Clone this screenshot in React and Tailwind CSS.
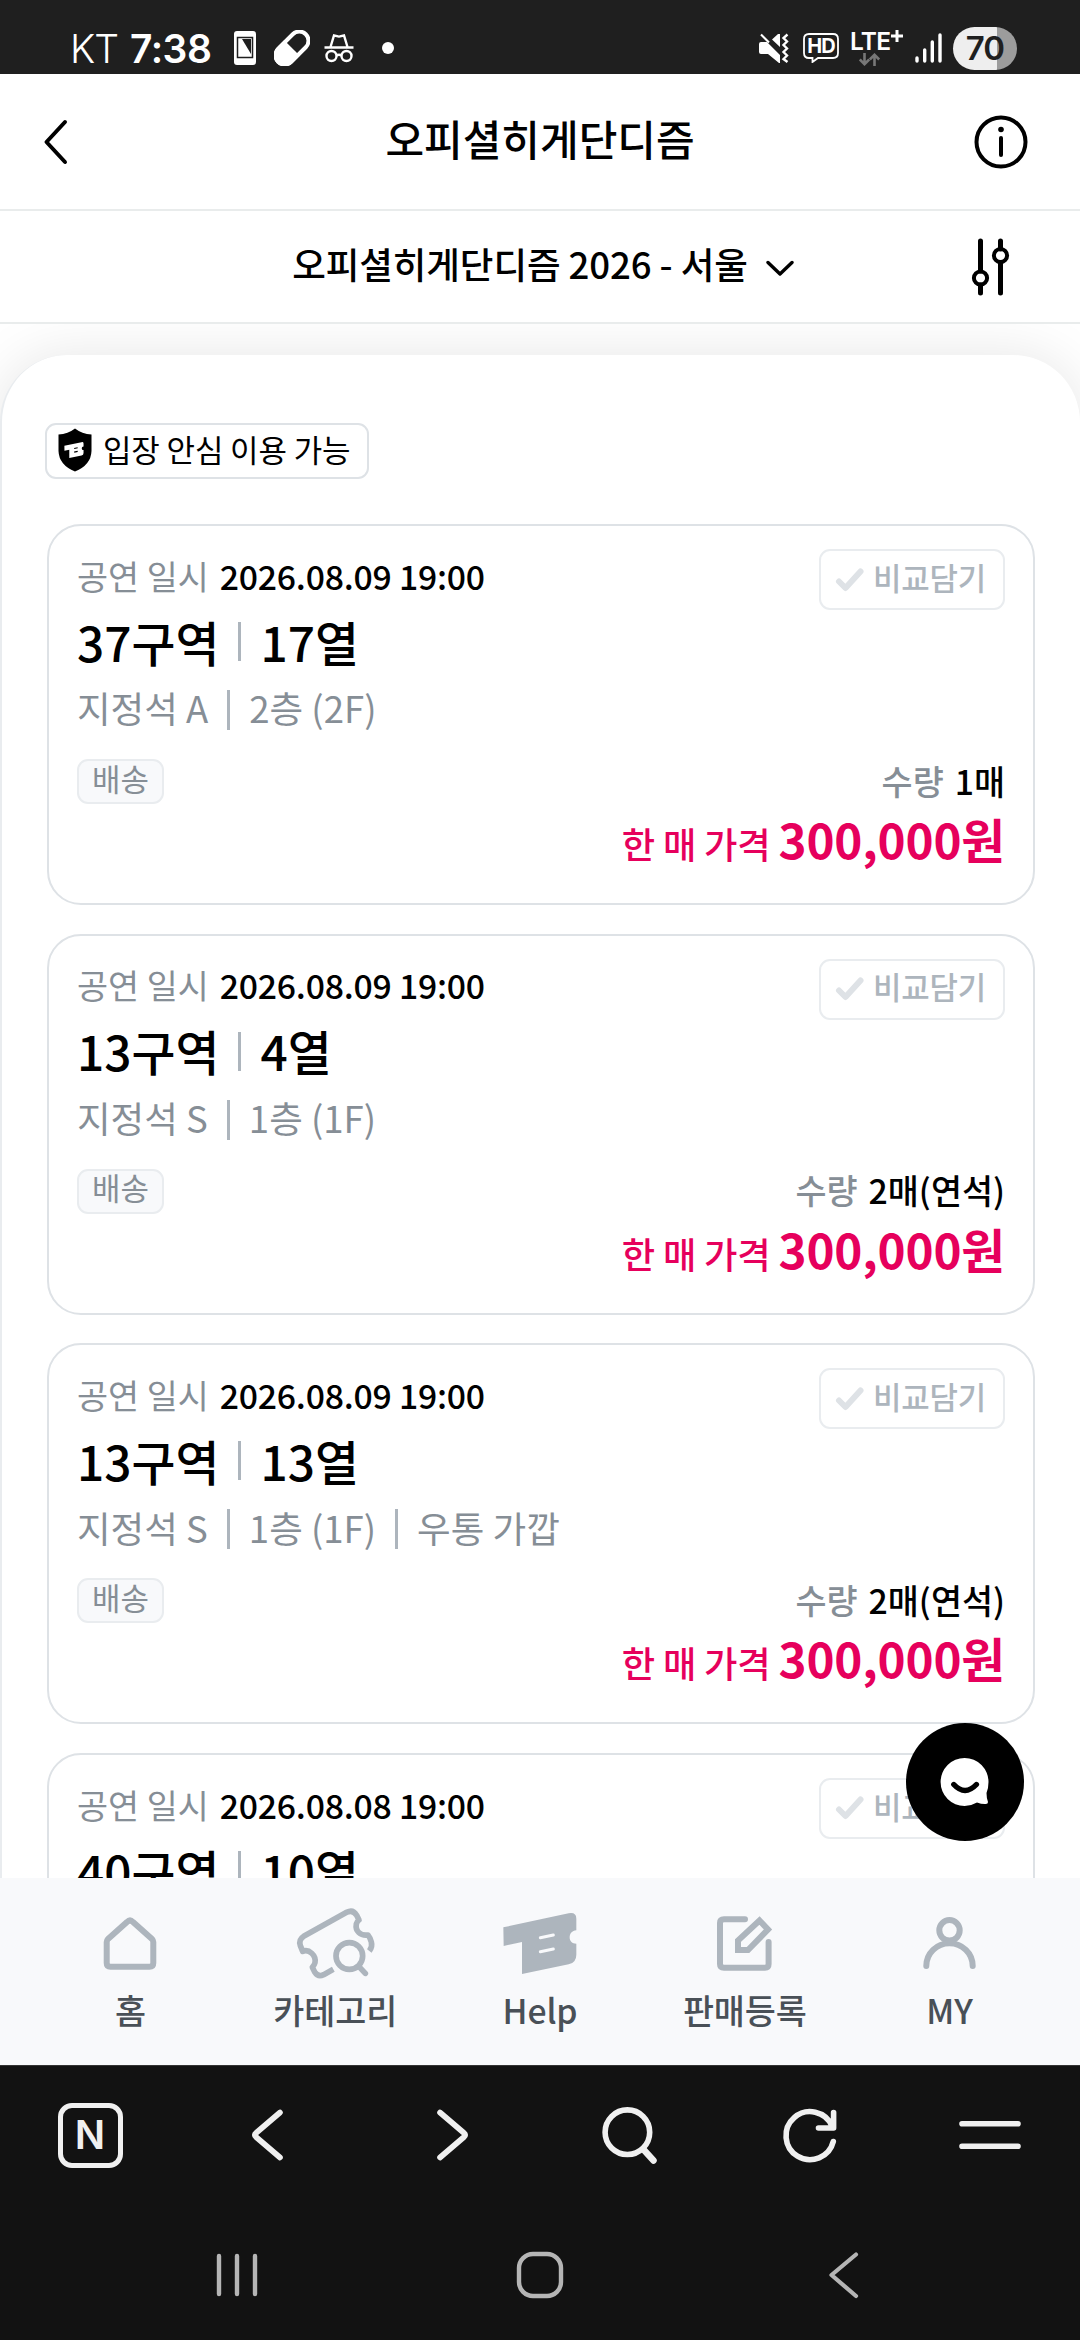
import React from 'react';

const tickets = [
  { date: '2026.08.09 19:00', area: '37구역', row: '17열', seat: ['지정석 A', '2층 (2F)'], qty: '1매', price: '300,000원' },
  { date: '2026.08.09 19:00', area: '13구역', row: '4열', seat: ['지정석 S', '1층 (1F)'], qty: '2매(연석)', price: '300,000원' },
  { date: '2026.08.09 19:00', area: '13구역', row: '13열', seat: ['지정석 S', '1층 (1F)', '우통 가깝'], qty: '2매(연석)', price: '300,000원' },
  { date: '2026.08.08 19:00', area: '40구역', row: '10열' },
];

const LOGO = 'M670 82 L866 40 Q889 36 889 56 V91 C876 92 869 101 869 112 C869 124 877 131 889 131 V164 Q889 188 866 193 L726 222 V126 L671 138 Z';

const StatusBar = () => (
  <div className="flex h-[74px] shrink-0 items-center bg-[#1f1f1f] pt-[22px] pl-[70px] pr-[63px] font-['Inter',sans-serif] text-white">
    <span className="w-[60px] text-[39px] leading-none font-light tracking-[-1px]">KT</span>
    <span className="w-[104px] text-[39px] leading-none font-semibold tracking-[-0.5px]">7:38</span>
    <svg width="22" height="34" viewBox="0 0 22 34">
      <rect width="22" height="34" rx="3" fill="#fff" />
      <rect x="3.5" y="6.5" width="15" height="20" fill="#fff" stroke="#1f1f1f" strokeWidth="1.5" />
      <path d="M8 8 H17 V23 Z" fill="#1f1f1f" />
    </svg>
    <svg className="ml-[18px]" width="36" height="36" viewBox="0 0 36 36">
      <g transform="rotate(45 18 18)">
        <rect x="8.8" y="-1.5" width="18.4" height="39" rx="9.2" fill="none" stroke="#fff" strokeWidth="4" />
        <path d="M7 18 H29 V28.5 A11 11 0 0 1 7 28.5 Z" fill="#fff" />
      </g>
    </svg>
    <svg className="ml-[14px]" width="30" height="30" viewBox="0 0 30 30" fill="none" stroke="#fff" strokeWidth="2.4">
      <path d="M0.5 14.5 H29.5 M6.5 14 L10 2.5 L13 3.2 Q15 4 17 3.2 L20 2.5 L23.5 14" />
      <circle cx="7.5" cy="23" r="5" />
      <circle cx="22.5" cy="23" r="5" />
      <path d="M12.5 22.5 Q15 21 17.5 22.5" />
    </svg>
    <span className="ml-[28px] h-3 w-3 rounded-full bg-white" />
    <svg className="ml-auto" width="30" height="30" viewBox="0 0 30 30">
      <path d="M0 11 Q0 9 2 9 H8 L21 22 V30 H20 L9 21 H2 Q0 21 0 19 Z M13 6.5 L19 1 H21 V14 Z" fill="#fff" />
      <path d="M2 1.5 L10 9.5" stroke="#fff" strokeWidth="2.2" />
      <path d="M28.5 1.5 L24.5 5 L28 8.5 L24.5 12 L28 15.5 L24.5 19 L28 22.5 L24.5 26 L28.5 29" fill="none" stroke="#fff" strokeWidth="2.4" />
    </svg>
    <div className="relative ml-[14px] h-[30px] w-[36px]">
      <svg width="36" height="30" viewBox="0 0 36 30" fill="none" stroke="#fff" strokeWidth="1.8">
        <path d="M6 1 H30 Q35 1 35 6 V20 Q35 25 30 25 H15 L9.5 29 V25 H6 Q1 25 1 20 V6 Q1 1 6 1 Z" />
      </svg>
      <span className="absolute top-[3px] left-0 w-full text-center text-[20px] leading-[20px] font-bold tracking-[-1px]">HD</span>
    </div>
    <div className="ml-[11px] flex h-[38px] w-[56px] flex-col">
      <div className="flex h-[22px] items-start">
        <span className="text-[24.5px] leading-[24px] font-semibold tracking-[-0.8px]">LTE</span>
        <svg width="14" height="14" viewBox="0 0 14 14"><path d="M7 1 V13 M1 7 H13" stroke="#fff" strokeWidth="3" /></svg>
      </div>
      <svg className="ml-[9px] mt-[2px]" width="22" height="13" viewBox="0 0 22 13" fill="none" stroke="#777" strokeWidth="2.6">
        <path d="M5.5 0 V11 M0.8 6.5 L5.5 11.2 L10.2 6.5 M15.5 13 V2 M10.8 6.5 L15.5 1.8 L20.2 6.5" />
      </svg>
    </div>
    <svg className="ml-[9px]" width="27" height="30" viewBox="0 0 27 30" stroke="#fff" strokeWidth="3.4" strokeLinecap="round">
      <path d="M2 25 V28 M9.7 17 V28 M17.3 9 V28 M25 2 V28" />
    </svg>
    <div className="ml-[11px] flex h-[43px] w-[64px] items-center justify-center overflow-hidden rounded-full bg-[linear-gradient(90deg,#eee_44px,#9c9c9c_44px)] text-[33px] leading-none font-semibold tracking-[-1px] text-[#1f1f1f]">
      70
    </div>
  </div>
);

const Header = () => (
  <header className="grid h-[137px] shrink-0 grid-cols-[1fr_auto_1fr] items-center border-b-2 border-[#e9ecec] px-[43px]">
    <svg width="26" height="46" viewBox="0 0 26 46" fill="none" stroke="#000" strokeWidth="4" strokeLinecap="round" strokeLinejoin="round">
      <path d="M22 3 L3.5 23 L22 43" />
    </svg>
    <h1 className="pb-[7px] text-[42px] leading-[60px] font-medium">오피셜히게단디즘</h1>
    <svg className="mr-[8px] justify-self-end" width="56" height="56" viewBox="0 0 56 56" fill="none" stroke="#000" strokeWidth="4" strokeLinecap="round">
      <circle cx="28" cy="28" r="24.5" />
      <path d="M28 24 V41" />
      <circle cx="28" cy="15.5" r="2.8" fill="#000" stroke="none" />
    </svg>
  </header>
);

const EventSelect = () => (
  <div className="grid h-[113px] shrink-0 grid-cols-[1fr_auto_1fr] items-center border-b-2 border-[#e9ecec] px-[43px]">
    <span />
    <div className="flex items-center pl-[6px]">
      <span className="pb-[5px] text-[36.56px] leading-[52px] font-medium tracking-[-0.1px]">오피셜히게단디즘 2026 - 서울</span>
      <svg className="mt-[3px] ml-[18px]" width="28" height="18" viewBox="0 0 28 18" fill="none" stroke="#000" strokeWidth="3.4" strokeLinecap="round" strokeLinejoin="round">
        <path d="M2 3.5 L14 15 L26 3.5" />
      </svg>
    </div>
    <svg className="mr-[27px] justify-self-end" width="40" height="60" viewBox="0 0 40 60" fill="none" stroke="#000" strokeLinecap="round">
      <path d="M10.5 4 V34 M10.5 48 V56 M30.5 4 V12 M30.5 26 V56" strokeWidth="5" />
      <circle cx="10.5" cy="41" r="6.6" strokeWidth="4" />
      <circle cx="30.5" cy="18.5" r="6.6" strokeWidth="4" />
    </svg>
  </div>
);

const SafeBadge = () => (
  <div className="flex h-[56px] w-[324px] items-center rounded-[11px] border-2 border-[#dee2e6] pl-[11px]">
    <svg className="mb-[3px] shrink-0" width="34" height="44" viewBox="0 0 34 44">
      <path d="M17 0.5 Q24 6 33.5 6.5 V23 Q33 37 17 43.5 Q1 37 0.5 23 V6.5 Q10 6 17 0.5 Z" fill="#000" />
      <svg x="5.5" y="12" width="21" height="20" viewBox="660 25 240 210">
        <path d={LOGO} fill="#fff" />
        <path d="M782 113 L822 104 M782 155 L822 146" stroke="#000" strokeWidth="14" />
      </svg>
    </svg>
    <span className="ml-[11px] pb-[4px] text-[30.94px] leading-[44px] tracking-[-0.1px] whitespace-nowrap">입장 안심 이용 가능</span>
  </div>
);

const Divider = ({ className }) => <span className={`mx-[19px] w-[3px] bg-[#adb5bd] ${className}`} />;

const TicketCard = ({ ticket }) => (
  <article className="h-[381px] shrink-0 rounded-[34px] border-2 border-[#dee2e6] px-[28px]">
    <div className="flex items-start justify-between">
      <div className="pt-[28px]">
        <p className="flex h-[43px] items-center text-[33.75px] leading-none">
          <span className="text-[#868e96]">공연 일시</span>
          <span className="ml-[11px] font-medium tracking-[-0.22px]">{ticket.date}</span>
        </p>
        <h2 className="flex h-[89px] items-center text-[47.8px] leading-none font-medium">
          <span>{ticket.area}</span>
          <Divider className="h-[39px]" />
          <span>{ticket.row}</span>
        </h2>
        {ticket.seat && (
          <p className="flex h-[45px] items-center text-[36.56px] leading-none text-[#868e96]">
            {ticket.seat.map((part, i) => (
              <React.Fragment key={part}>
                {i > 0 && <Divider className="mt-[3px] h-[40px]" />}
                <span>{part}</span>
              </React.Fragment>
            ))}
          </p>
        )}
      </div>
      <button className="mt-[23px] flex h-[61px] w-[186px] items-center rounded-[11px] border-2 border-[#e9ecef] pl-[14px]">
        <svg width="30" height="26" viewBox="0 0 30 26" fill="none" stroke="#dee2e6" strokeWidth="6" strokeLinecap="round" strokeLinejoin="round">
          <path d="M4 14.5 L10.5 21 L25.5 4.5" />
        </svg>
        <span className="ml-[8px] pb-[5px] text-[30.94px] leading-none font-medium tracking-[-0.2px] whitespace-nowrap text-[#adb5bd]">비교담기</span>
      </button>
    </div>
    {ticket.price && (
      <div className="flex items-start justify-between">
        <span className="mt-[28px] flex h-[45px] w-[87px] items-center justify-center rounded-[11px] border-2 border-[#e9ecef] bg-[#f8f9fb] pb-[7px] text-[30.94px] leading-none text-[#868e96]">
          배송
        </span>
        <div className="flex flex-col items-end pt-[24px]">
          <p className="flex h-[51px] items-center text-[33.75px] leading-none font-medium">
            <span className="text-[#868e96]">수량</span>
            <span className="ml-[11px]">{ticket.qty}</span>
          </p>
          <p className="text-[#e6005c]">
            <span className="text-[36.3px] leading-[66px] font-medium tracking-[-0.2px]">한 매 가격 </span>
            <span className="text-[47.6px] leading-[66px] font-bold tracking-[-0.15px]">{ticket.price}</span>
          </p>
        </div>
      </div>
    )}
  </article>
);

const line = { fill: 'none', stroke: '#adb5bd', strokeWidth: 6, strokeLinecap: 'round', strokeLinejoin: 'round' };

const tabs = [
  {
    label: '홈',
    icon: (
      <svg width="84" height="84" viewBox="0 0 84 84" {...line}>
        <path d="M39 22 Q42 19 45 22 L64 39 Q65.3 40.5 65.3 42 V63 Q65.3 66.7 61.5 66.7 H22.5 Q18.7 66.7 18.7 63 V42 Q18.7 40.5 20 39 Z" />
      </svg>
    ),
  },
  {
    label: '카테고리',
    icon: (
      <svg width="84" height="84" viewBox="36 0 252 252" {...line} strokeWidth="17" strokeLinecap="butt">
        <path d="M265 153 Q275 140 271 126 Q267 112 261 105 C238 108 222 93 226 72 Q228 64 234 60 L227 46 Q216 27 197 37 L68 109 Q52 119 58 137 L65 154 C84 146 106 166 102 188 Q100 196 94 202 L101 216 Q111 232 128 224 L157 208" />
        <circle cx="205" cy="168" r="40" />
        <path d="M234 200 L253 220" strokeLinecap="round" />
      </svg>
    ),
  },
  {
    label: 'Help',
    icon: (
      <svg width="84" height="84" viewBox="654 0 252 252">
        <path d={LOGO} fill="#adb5bd" />
        <path d="M781 113 L820 105 M781 155 L820 147" stroke="#f8f9fb" strokeWidth="9" strokeLinecap="round" />
      </svg>
    ),
  },
  {
    label: '판매등록',
    icon: (
      <svg width="84" height="84" viewBox="0 0 84 84" {...line}>
        <path d="M42 19.3 H21 Q17 19.3 17 23 V64 Q17 67.7 21 67.7 H62 Q65.6 67.7 65.6 64 V42" />
        <path d="M35 50 V40.5 L56.5 20.5 L65 29.5 L45 50 Z" strokeLinejoin="miter" />
      </svg>
    ),
  },
  {
    label: 'MY',
    icon: (
      <svg width="84" height="84" viewBox="0 0 84 84" {...line}>
        <circle cx="41.5" cy="30.3" r="10.2" />
        <path d="M18.3 66 A23.2 22.8 0 0 1 64.7 66" />
      </svg>
    ),
  },
];

const TabBar = () => (
  <nav className="grid h-[187px] shrink-0 grid-cols-5 bg-[#f8f9fb] px-[28px] pt-[22px]">
    {tabs.map((tab) => (
      <div key={tab.label} className="flex flex-col items-center">
        {tab.icon}
        <span className="text-[33.75px] leading-[52px] font-medium tracking-[-0.1px] text-[#495057]">{tab.label}</span>
      </div>
    ))}
  </nav>
);

const bar = { width: 70, height: 70, viewBox: '0 0 70 70', fill: 'none', stroke: '#f0f0f0', strokeWidth: 5.6, strokeLinecap: 'round', strokeLinejoin: 'round' };

const BrowserBar = () => (
  <div className="grid h-[139px] shrink-0 grid-cols-6 items-center justify-items-center border-t border-[#333]">
    <span className="flex h-[65px] w-[65px] items-center justify-center rounded-[14px] border-[5.5px] border-[#f0f0f0] font-['Inter',sans-serif] text-[40px] leading-none font-semibold text-[#f0f0f0]">N</span>
    <svg {...bar}><path d="M45 12.5 L21 33 Q18.5 35 21 37 L45 57.5" /></svg>
    <svg {...bar}><path d="M25 12.5 L49 33 Q51.5 35 49 37 L25 57.5" /></svg>
    <svg {...bar}><circle cx="32.4" cy="32.2" r="22.3" /><path d="M48.5 49.5 L58.5 60.5" strokeWidth="6.5" /></svg>
    <svg {...bar}><path d="M58.3 41.5 A24 24 0 1 1 57 26 M58.6 12.5 V28 H43.5" /></svg>
    <svg {...bar}><path d="M7 23.8 H63 M7 46.3 H63" /></svg>
  </div>
);

const SystemNav = () => (
  <div className="grid grow grid-cols-3 items-center justify-items-center px-[86px] pt-[5px]">
    <svg width="44" height="46" viewBox="0 0 44 46" stroke="#b5b5b5" strokeWidth="4.4" strokeLinecap="round">
      <path d="M4 4 V42 M22 4 V42 M40 4 V42" />
    </svg>
    <svg width="48" height="48" viewBox="0 0 48 48" fill="none" stroke="#b5b5b5" strokeWidth="4.4">
      <rect x="3" y="3" width="42" height="42" rx="14" />
    </svg>
    <svg width="36" height="48" viewBox="0 0 36 48" fill="none" stroke="#b5b5b5" strokeWidth="4.2" strokeLinecap="round" strokeLinejoin="round">
      <path d="M31 3.5 L6.5 24 L31 45" />
    </svg>
  </div>
);

export default function App() {
  return (
    <div className="relative flex h-[2340px] w-[1080px] flex-col overflow-hidden bg-[#121212] font-['Noto_Sans_CJK_KR',sans-serif] text-black">
      <StatusBar />
      <div className="flex h-[1804px] shrink-0 flex-col overflow-hidden bg-white">
        <Header />
        <EventSelect />
        <main className="min-h-0 grow overflow-hidden pt-[31px]">
          <div className="rounded-t-[67px] border-l-2 border-[#e9ecef] bg-white pt-[68px] pr-[45px] pl-[43px] shadow-[0_0_56px_rgba(0,0,0,0.1)]">
            <SafeBadge />
            <div className="mt-[45px] flex flex-col gap-[28.67px] pl-[2px]">
              {tickets.map((ticket, i) => (
                <TicketCard key={i} ticket={ticket} />
              ))}
            </div>
          </div>
        </main>
      </div>
      <TabBar />
      <BrowserBar />
      <SystemNav />
      <button className="absolute top-[1723px] left-[906px] h-[118px] w-[118px] rounded-full bg-black">
        <svg width="118" height="118" viewBox="0 0 118 118">
          <path d="M58.6 35 A24 24 0 0 1 82.5 59 Q82.5 65 80.5 70 Q80.5 75 82 79 Q82 81.5 79 81 Q75 81 71 79.5 Q65 83 58.6 83 A24 24 0 0 1 58.6 35 Z" fill="#fff" />
          <path d="M47.8 61.5 Q59 73.5 70.4 61.5" fill="none" stroke="#000" strokeWidth="5.4" strokeLinecap="round" />
        </svg>
      </button>
    </div>
  );
}
